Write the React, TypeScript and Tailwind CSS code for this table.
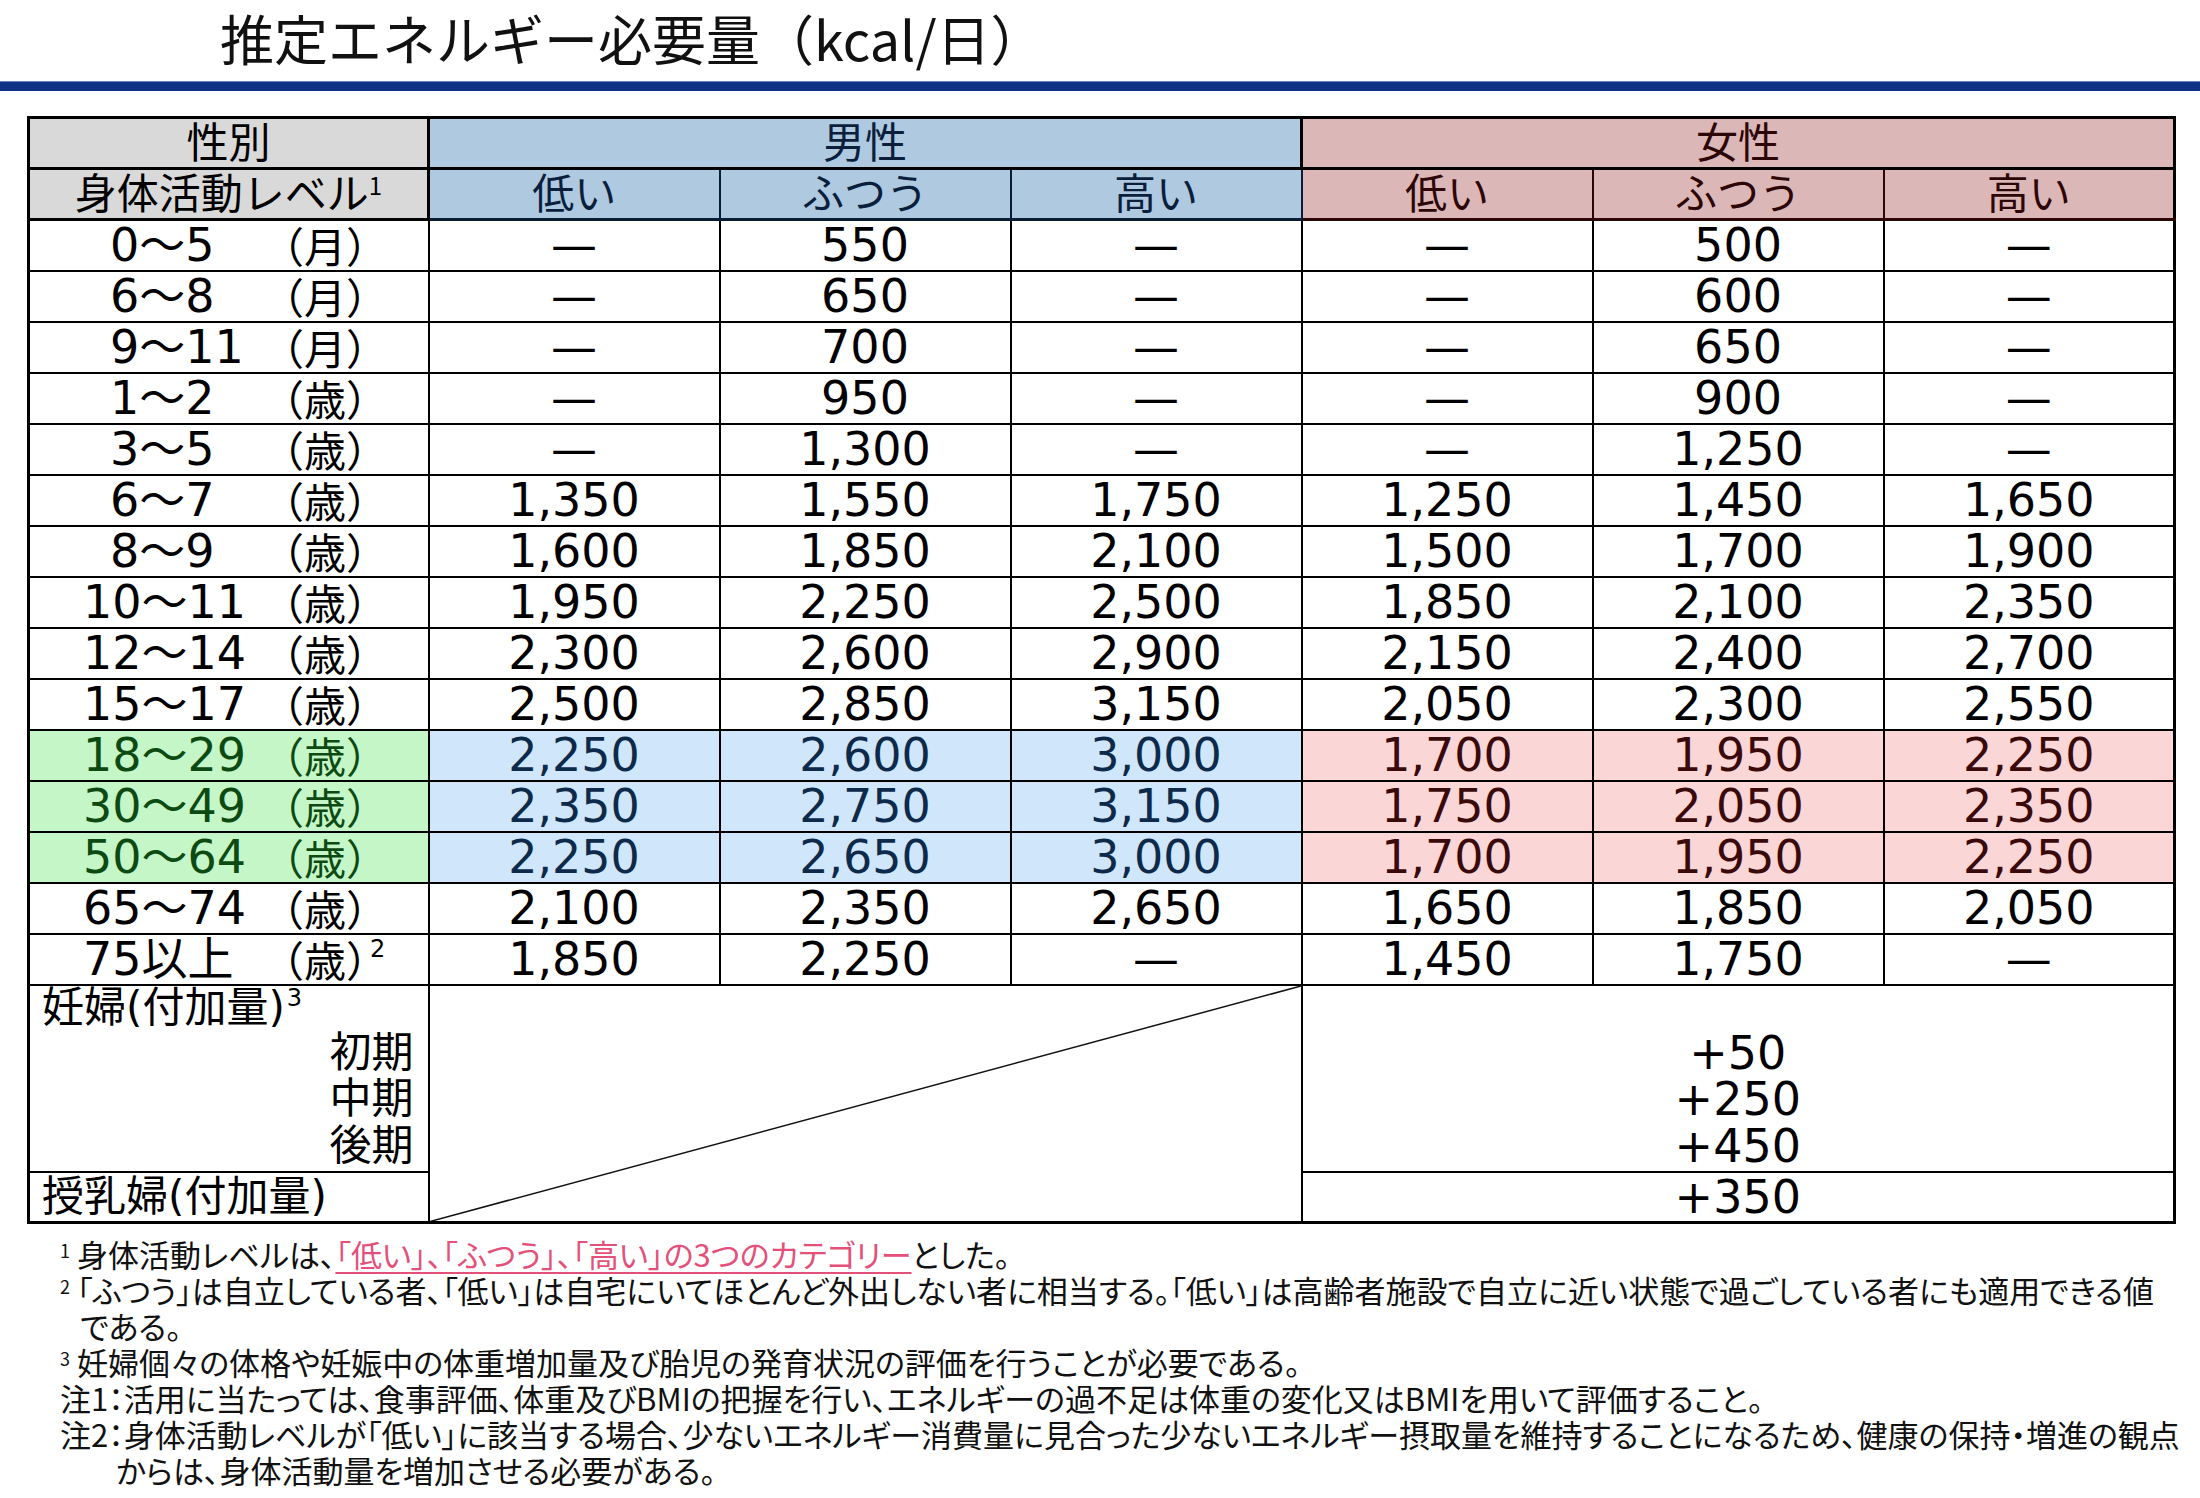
import React from "react";

type Row = { age: string; unit: string; vals: string[]; hl?: boolean; sup?: string };

const rows: Row[] = [
  { age: "0～5", unit: "月", vals: ["—", "550", "—", "—", "500", "—"] },
  { age: "6～8", unit: "月", vals: ["—", "650", "—", "—", "600", "—"] },
  { age: "9～11", unit: "月", vals: ["—", "700", "—", "—", "650", "—"] },
  { age: "1～2", unit: "歳", vals: ["—", "950", "—", "—", "900", "—"] },
  { age: "3～5", unit: "歳", vals: ["—", "1,300", "—", "—", "1,250", "—"] },
  { age: "6～7", unit: "歳", vals: ["1,350", "1,550", "1,750", "1,250", "1,450", "1,650"] },
  { age: "8～9", unit: "歳", vals: ["1,600", "1,850", "2,100", "1,500", "1,700", "1,900"] },
  { age: "10～11", unit: "歳", vals: ["1,950", "2,250", "2,500", "1,850", "2,100", "2,350"] },
  { age: "12～14", unit: "歳", vals: ["2,300", "2,600", "2,900", "2,150", "2,400", "2,700"] },
  { age: "15～17", unit: "歳", vals: ["2,500", "2,850", "3,150", "2,050", "2,300", "2,550"] },
  { age: "18～29", unit: "歳", vals: ["2,250", "2,600", "3,000", "1,700", "1,950", "2,250"], hl: true },
  { age: "30～49", unit: "歳", vals: ["2,350", "2,750", "3,150", "1,750", "2,050", "2,350"], hl: true },
  { age: "50～64", unit: "歳", vals: ["2,250", "2,650", "3,000", "1,700", "1,950", "2,250"], hl: true },
  { age: "65～74", unit: "歳", vals: ["2,100", "2,350", "2,650", "1,650", "1,850", "2,050"] },
  { age: "75以上", unit: "歳", vals: ["1,850", "2,250", "—", "1,450", "1,750", "—"], sup: "2" },
];

const levels = ["低い", "ふつう", "高い"];

function AgeCell({ row }: { row: Row }) {
  const wide = row.age.length > 4 || row.age.startsWith("75");
  return (
    <td
      className={`border-2 border-black p-0 ${
        row.hl ? "bg-[#c4f6c8] text-[#0c4a12]" : "bg-white text-black"
      }`}
    >
      <div className="flex items-center h-[48px] whitespace-nowrap">
        <span className={`inline-block w-[232px] text-[46px] leading-none ${wide ? "pl-[53px]" : "pl-[80px]"}`}>
          {row.age}
        </span>
        <span className="text-[42px] leading-none font-['Noto_Sans_CJK_JP',sans-serif]">（{row.unit}）</span>
        {row.sup && <span className="relative -top-[10px] -ml-[18px] text-[24px] leading-none">{row.sup}</span>}
      </div>
    </td>
  );
}

export default function App() {
  return (
    <div className="w-[2200px] h-[1498px] bg-white overflow-hidden font-['DejaVu_Sans','Noto_Sans_CJK_JP',sans-serif] text-black">
      {/* Title */}
      <div className="h-[81px] flex items-center pl-[220px] pb-[6px]">
        <h1 className="text-[54px] leading-[64px] font-['Noto_Sans_CJK_JP',sans-serif] text-[#111]">
          推定エネルギー必要量（kcal/日）
        </h1>
      </div>
      <div className="h-[10px] bg-[#0f3384] border-t border-[#6b86bf]" />

      {/* Table */}
      <table className="mt-[25px] ml-[27px] w-[2146px] table-fixed border-collapse border-[3px] border-black">
        <colgroup>
          <col className="w-[400px]" />
          <col className="w-[291px]" />
          <col className="w-[291px]" />
          <col className="w-[291px]" />
          <col className="w-[291px]" />
          <col className="w-[291px]" />
          <col className="w-[291px]" />
        </colgroup>
        <thead className="font-['Noto_Sans_CJK_JP',sans-serif] text-[42px] leading-none">
          <tr className="h-[51px]">
            <th className="border-[3px] border-black bg-[#d9d9d9] font-normal text-black pb-[6px]">性別</th>
            <th colSpan={3} className="border-[3px] border-black bg-[#afc9e1] font-normal text-[#0b1f3d] pb-[6px]">
              男性
            </th>
            <th colSpan={3} className="border-[3px] border-black bg-[#dcb7b7] font-normal text-[#2d0707] pb-[6px]">
              女性
            </th>
          </tr>
          <tr className="h-[51px]">
            <th className="border-[3px] border-black bg-[#d9d9d9] font-normal text-black whitespace-nowrap pb-[6px]">
              身体活動レベル<span className="relative -top-[14px] text-[24px]">1</span>
            </th>
            {levels.map((l) => (
              <th key={"m" + l} className="border-2 border-[#0b1d36] border-b-[3px] bg-[#afc9e1] font-normal text-[#0b1f3d] pb-[6px]">
                {l}
              </th>
            ))}
            {levels.map((l) => (
              <th key={"f" + l} className="border-2 border-[#2d0707] border-b-[3px] bg-[#dcb7b7] font-normal text-[#2d0707] pb-[6px]">
                {l}
              </th>
            ))}
          </tr>
        </thead>
        <tbody className="text-[46px] leading-none">
          {rows.map((row) => (
            <tr key={row.age} className="h-[51px]">
              <AgeCell row={row} />
              {row.vals.map((v, i) => (
                <td
                  key={i}
                  className={`border-2 border-black text-center p-0 ${
                    row.hl
                      ? i < 3
                        ? "bg-[#cfe6fb] text-[#0d2a4a]"
                        : "bg-[#fad6d7] text-[#3a0a0a]"
                      : "bg-white"
                  }`}
                >
                  {v}
                </td>
              ))}
            </tr>
          ))}

          {/* Pregnant */}
          <tr className="h-[187px]">
            <td className="border-2 border-black p-0 align-top">
              <div className="flex flex-col text-[42px] leading-none whitespace-nowrap">
                <div className="h-[44px] flex items-center pl-[12px]">
                  妊婦(付加量)<span className="relative -top-[10px] text-[24px] ml-[2px]">3</span>
                </div>
                <div className="h-[46px] flex items-center justify-end pr-[14px]">初期</div>
                <div className="h-[46px] flex items-center justify-end pr-[14px]">中期</div>
                <div className="h-[48px] flex items-center justify-end pr-[14px]">後期</div>
              </div>
            </td>
            <td rowSpan={2} colSpan={3} className="relative border-2 border-black p-0">
              <svg className="absolute inset-0 w-full h-full" viewBox="0 0 100 100" preserveAspectRatio="none">
                <line x1="0" y1="100" x2="100" y2="0" stroke="#111" strokeWidth="1.5" vectorEffect="non-scaling-stroke" />
              </svg>
            </td>
            <td colSpan={3} className="border-2 border-black p-0 align-top">
              <div className="flex flex-col items-center">
                <div className="h-[44px]" />
                <div className="h-[46px] flex items-center">+50</div>
                <div className="h-[46px] flex items-center">+250</div>
                <div className="h-[48px] flex items-center">+450</div>
              </div>
            </td>
          </tr>

          {/* Lactating */}
          <tr className="h-[51px]">
            <td className="border-2 border-black p-0">
              <div className="text-[42px] leading-none pl-[12px] whitespace-nowrap">授乳婦(付加量)</div>
            </td>
            <td colSpan={3} className="border-2 border-black text-center p-0">
              +350
            </td>
          </tr>
        </tbody>
      </table>

      {/* Notes */}
      <div className="mt-[12px] ml-[60px] font-['Noto_Sans_CJK_JP',sans-serif] text-[31px] [font-feature-settings:'palt'] text-[#111]">
        <div className="h-[36px] leading-[36px] whitespace-nowrap">
          <span className="relative -top-[9px] text-[18px] mr-[7px]">1</span>
          身体活動レベルは、
          <span className="text-[#e4507a] underline decoration-2 decoration-[#e4507a] underline-offset-[5px]">
            「低い」、「ふつう」、「高い」の3つのカテゴリー
          </span>
          とした。
        </div>
        <div className="h-[36px] leading-[36px] whitespace-nowrap">
          <span className="relative -top-[9px] text-[18px] mr-[7px]">2</span>
          「ふつう」は自立している者、「低い」は自宅にいてほとんど外出しない者に相当する。「低い」は高齢者施設で自立に近い状態で過ごしている者にも適用できる値
        </div>
        <div className="h-[36px] leading-[36px] whitespace-nowrap pl-[20px]">である。</div>
        <div className="h-[36px] leading-[36px] whitespace-nowrap">
          <span className="relative -top-[9px] text-[18px] mr-[7px]">3</span>
          妊婦個々の体格や妊娠中の体重増加量及び胎児の発育状況の評価を行うことが必要である。
        </div>
        <div className="h-[36px] leading-[36px] whitespace-nowrap">
          注1：活用に当たっては、食事評価、体重及びBMIの把握を行い、エネルギーの過不足は体重の変化又はBMIを用いて評価すること。
        </div>
        <div className="h-[36px] leading-[36px] whitespace-nowrap">
          注2：身体活動レベルが「低い」に該当する場合、少ないエネルギー消費量に見合った少ないエネルギー摂取量を維持することになるため、健康の保持・増進の観点
        </div>
        <div className="h-[36px] leading-[36px] whitespace-nowrap pl-[56px]">からは、身体活動量を増加させる必要がある。</div>
      </div>
    </div>
  );
}
